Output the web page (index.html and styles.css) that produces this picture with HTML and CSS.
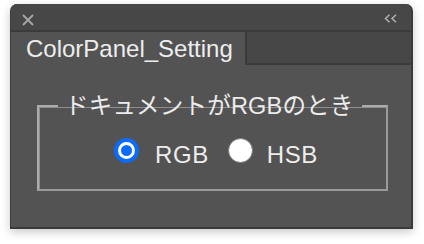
FILE: index.html
```html
<!DOCTYPE html>
<html lang="ja">
<head>
<meta charset="utf-8">
<link rel="stylesheet" href="styles.css">
</head>
<body>
<div class="window">
  <div class="titlebar">
    <span class="close">
      <svg width="12" height="12" viewBox="0 0 12 12"><path d="M1 1L11 11M11 1L1 11" stroke="#a6a6a6" stroke-width="1.8" fill="none"/></svg>
    </span>
    <span class="collapse">
      <svg width="13" height="9" viewBox="0 0 13 9"><path d="M5.5 0.8L1.5 4.5L5.5 8.2M12 0.8L8 4.5L12 8.2" stroke="#b0b0b0" stroke-width="1.5" fill="none"/></svg>
    </span>
  </div>
  <div class="tabrow">
    <div class="tab">ColorPanel_Setting</div>
    <div class="tabrest"></div>
  </div>
  <div class="content">
    <fieldset class="group">
      <legend class="legend">ドキュメントがRGBのとき</legend>
      <div class="options">
        <label class="option">
          <span class="radio radio-on"></span>
          <span class="label">RGB</span>
        </label>
        <label class="option">
          <span class="radio radio-off"></span>
          <span class="label">HSB</span>
        </label>
      </div>
    </fieldset>
  </div>
</div>
</body>
</html>
```

FILE: styles.css
```css
html, body {
  margin: 0;
  padding: 0;
  background: #ffffff;
}
body {
  width: 424px;
  height: 244px;
  overflow: hidden;
  font-family: "Liberation Sans", "Noto Sans CJK JP", sans-serif;
  color: #ececec;
}
.window {
  box-sizing: border-box;
  width: 403px;
  height: 225px;
  margin: 4px 0 0 10px;
  background: #535353;
  border-radius: 7px 7px 0 0;
  border-left: 1px solid #3c3c3c;
  border-right: 2px solid #3a3a3a;
  border-bottom: 2px solid #3a3a3a;
  box-shadow: 0 3px 10px rgba(0, 0, 0, 0.22);
  display: flex;
  flex-direction: column;
  overflow: hidden;
}
.titlebar {
  height: 26px;
  background: #474747;
  border-bottom: 2px solid #3b3b3b;
  display: flex;
  align-items: center;
  justify-content: space-between;
  padding: 0 14px 0 11px;
  flex: none;
}
.close, .collapse {
  display: flex;
  align-items: center;
}
.close {
  margin-top: 6px;
}
.collapse {
  margin-top: 3px;
}
.tabrow {
  height: 33px;
  display: flex;
  flex: none;
}
.tab {
  width: 234px;
  padding-left: 15px;
  box-sizing: border-box;
  font-size: 24px;
  line-height: 33px;
  color: #ededed;
  background: #535353;
  white-space: nowrap;
}
.tabrest {
  flex: 1;
  background: #474747;
  border-left: 2px solid #3b3b3b;
  border-bottom: 2px solid #3b3b3b;
}
.content {
  flex: 1;
  padding: 29px 0 0 26px;
}
.group {
  box-sizing: border-box;
  width: 351px;
  height: 97px;
  margin: 0;
  padding: 20px 0 0 19px;
  border: 2px solid #a6a6a6;
  border-color: #acacac #9a9a9a #9a9a9a #acacac;
  box-shadow: inset 1px 1px 0 #8e8e8e;
}
.legend {
  padding: 0 8px 0 7px;
  font-size: 23.5px;
  line-height: 24px;
  color: #ececec;
  white-space: nowrap;
  letter-spacing: 0.2px;
}
.options {
  display: flex;
  align-items: flex-start;
  padding-left: 56px;
}
.option {
  display: flex;
  align-items: flex-start;
}
.option + .option {
  margin-left: 19px;
}
.radio {
  box-sizing: border-box;
  width: 25px;
  height: 25px;
  border-radius: 50%;
  position: relative;
  flex: none;
}
.radio-on {
  background: #0a6cff;
}
.radio-on::after {
  content: "";
  position: absolute;
  left: 4px;
  top: 4px;
  width: 17px;
  height: 17px;
  box-sizing: border-box;
  border-radius: 50%;
  border: 3px solid #ffffff;
  background: #0a6cff;
}
.radio-off {
  background: #ffffff;
  border: 1px solid #7a7a7a;
}
.label {
  font-size: 24px;
  line-height: 25px;
  margin-top: 4px;
  color: #ededed;
  letter-spacing: 0.6px;
}
.radio-on + .label {
  margin-left: 16px;
}
.radio-off + .label {
  margin-left: 14px;
}
```
